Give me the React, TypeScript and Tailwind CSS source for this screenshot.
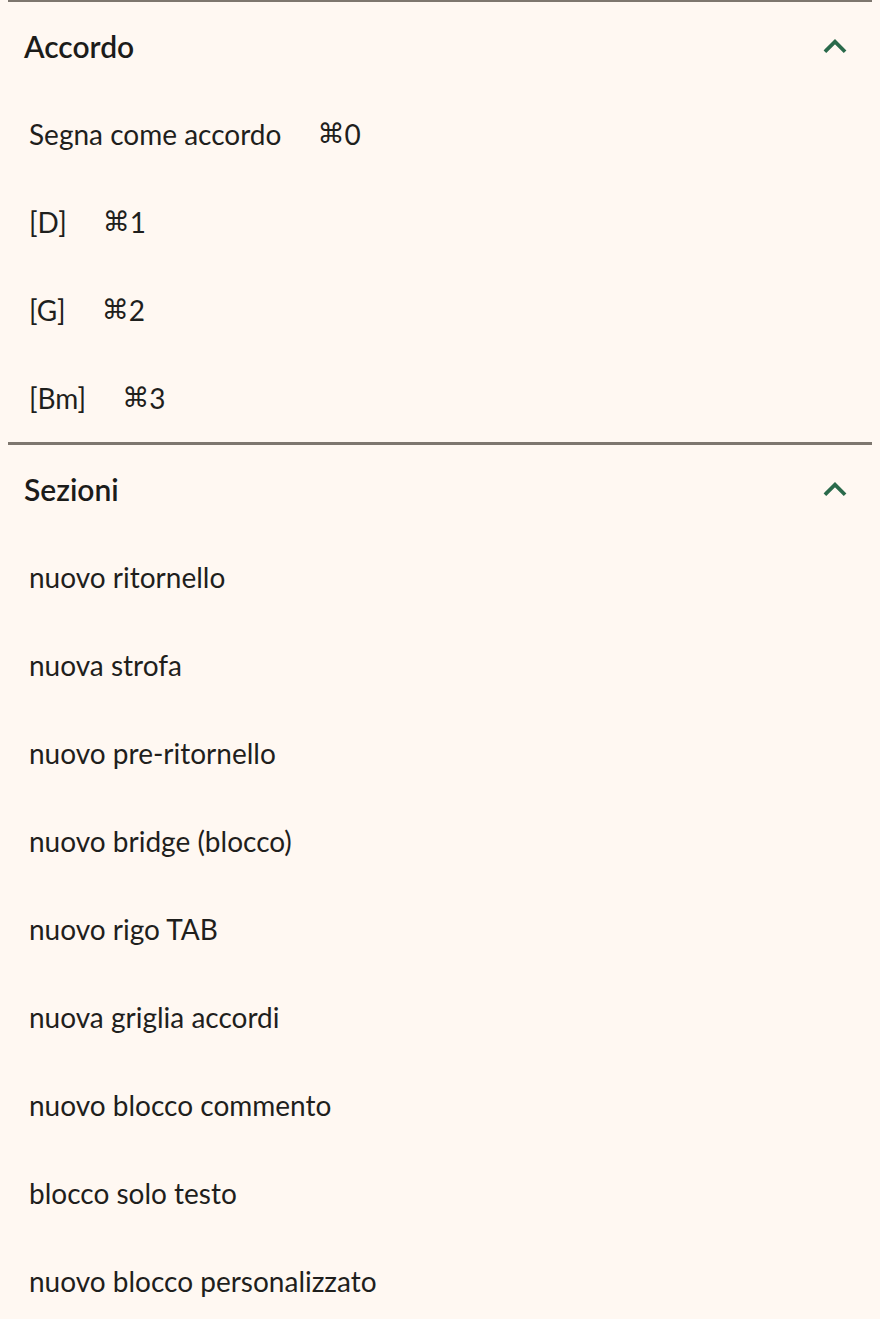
import { ReactNode } from "react";

const chordItems = [
  { label: "Segna come accordo", shortcut: "0" },
  { label: "[D]", shortcut: "1" },
  { label: "[G]", shortcut: "2" },
  { label: "[Bm]", shortcut: "3" },
];

const sectionItems = [
  "nuovo ritornello",
  "nuova strofa",
  "nuovo pre-ritornello",
  "nuovo bridge (blocco)",
  "nuovo rigo TAB",
  "nuova griglia accordi",
  "nuovo blocco commento",
  "blocco solo testo",
  "nuovo blocco personalizzato",
];

function Chevron() {
  return (
    <svg width="30" height="30" viewBox="0 0 24 24" fill="none">
      <path
        d="M5 15.5 L12 8.5 L19 15.5"
        stroke="#2a6a4b"
        strokeWidth="3"
        strokeLinecap="square"
      />
    </svg>
  );
}

function Group({ title, children }: { title: string; children: ReactNode }) {
  return (
    <div className="mx-2 border-t-[3px] border-[#7e776f]">
      <button className="w-full h-[88px] flex items-center justify-between pl-4 pr-[22px] text-left">
        <span className="text-[30px] font-semibold text-[#1c1c1a]">{title}</span>
        <Chevron />
      </button>
      <div>{children}</div>
    </div>
  );
}

function Row({ children }: { children: ReactNode }) {
  return (
    <div className="h-[88px] flex items-center pl-[21px] text-[28px] text-[#1f1f1d]">
      {children}
    </div>
  );
}

export default function App() {
  return (
    <div
      className="w-[880px] h-[1320px] overflow-hidden bg-[#fff8f2] -mt-px"
      style={{ fontFamily: '"Lato", "Noto Sans", sans-serif' }}
    >
      <Group title="Accordo">
        {chordItems.map((item) => (
          <Row key={item.label}>
            <span>{item.label}</span>
            <span className="ml-9 flex items-center">
              <span style={{ fontFamily: '"DejaVu Sans", sans-serif' }} className="text-[27px]">
                ⌘
              </span>
              <span>{item.shortcut}</span>
            </span>
          </Row>
        ))}
      </Group>
      <Group title="Sezioni">
        {sectionItems.map((label) => (
          <Row key={label}>{label}</Row>
        ))}
      </Group>
    </div>
  );
}
